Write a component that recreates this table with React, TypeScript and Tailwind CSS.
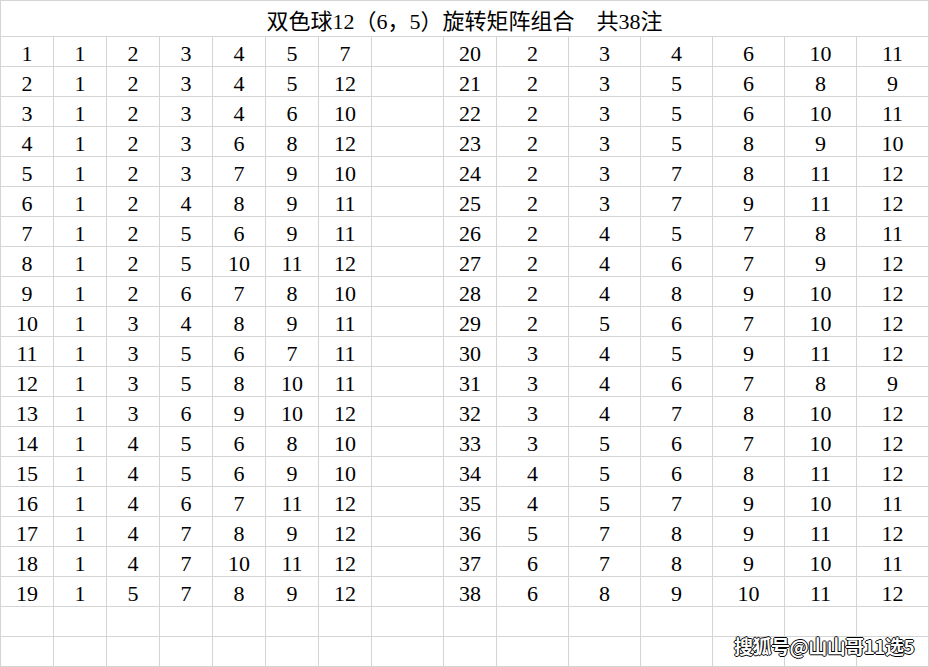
const left: number[][] = [
  [1, 1, 2, 3, 4, 5, 7],
  [2, 1, 2, 3, 4, 5, 12],
  [3, 1, 2, 3, 4, 6, 10],
  [4, 1, 2, 3, 6, 8, 12],
  [5, 1, 2, 3, 7, 9, 10],
  [6, 1, 2, 4, 8, 9, 11],
  [7, 1, 2, 5, 6, 9, 11],
  [8, 1, 2, 5, 10, 11, 12],
  [9, 1, 2, 6, 7, 8, 10],
  [10, 1, 3, 4, 8, 9, 11],
  [11, 1, 3, 5, 6, 7, 11],
  [12, 1, 3, 5, 8, 10, 11],
  [13, 1, 3, 6, 9, 10, 12],
  [14, 1, 4, 5, 6, 8, 10],
  [15, 1, 4, 5, 6, 9, 10],
  [16, 1, 4, 6, 7, 11, 12],
  [17, 1, 4, 7, 8, 9, 12],
  [18, 1, 4, 7, 10, 11, 12],
  [19, 1, 5, 7, 8, 9, 12],
];

const right: number[][] = [
  [20, 2, 3, 4, 6, 10, 11],
  [21, 2, 3, 5, 6, 8, 9],
  [22, 2, 3, 5, 6, 10, 11],
  [23, 2, 3, 5, 8, 9, 10],
  [24, 2, 3, 7, 8, 11, 12],
  [25, 2, 3, 7, 9, 11, 12],
  [26, 2, 4, 5, 7, 8, 11],
  [27, 2, 4, 6, 7, 9, 12],
  [28, 2, 4, 8, 9, 10, 12],
  [29, 2, 5, 6, 7, 10, 12],
  [30, 3, 4, 5, 9, 11, 12],
  [31, 3, 4, 6, 7, 8, 9],
  [32, 3, 4, 7, 8, 10, 12],
  [33, 3, 5, 6, 7, 10, 12],
  [34, 4, 5, 6, 8, 11, 12],
  [35, 4, 5, 7, 9, 10, 11],
  [36, 5, 7, 8, 9, 11, 12],
  [37, 6, 7, 8, 9, 10, 11],
  [38, 6, 8, 9, 10, 11, 12],
];

function Cell({ value }: { value?: number }) {
  return (
    <div className="h-[30px] flex items-end justify-center pb-[1px] border-r border-b border-[#d4d4d4] leading-[22px]">
      {value ?? ""}
    </div>
  );
}

export default function App() {
  const rows = left.map((l, i) => [...l, undefined, ...right[i]]);

  return (
    <div className="relative w-[929px] h-[667px] bg-white text-black overflow-hidden">
      <div className="grid grid-cols-[repeat(7,53px)_72px_53px_repeat(6,72px)] border-t border-l border-[#d4d4d4] font-[family-name:'Liberation_Serif','Noto_Sans_CJK_SC',serif] text-[22px] font-normal">
        <div className="col-span-full h-[36px] flex items-end justify-center pb-[3px] border-r border-b border-[#d4d4d4] leading-[22px]">
          双色球12（6，5）旋转矩阵组合　共38注
        </div>

        {rows.map((row, i) =>
          row.map((v, j) => <Cell key={`${i}-${j}`} value={v} />)
        )}

        {[...Array(30)].map((_, i) => (
          <Cell key={`e-${i}`} />
        ))}
      </div>

      <div className="absolute left-[734px] top-[636px] font-[family-name:'Noto_Sans_CJK_SC',sans-serif] font-bold text-[19px] leading-[20px] tracking-[-0.5px] text-white [text-shadow:1px_0_0_#000,-1px_0_0_#000,0_1px_0_#000,0_-1px_0_#000]">
        搜狐号@山山哥11选5
      </div>
    </div>
  );
}
